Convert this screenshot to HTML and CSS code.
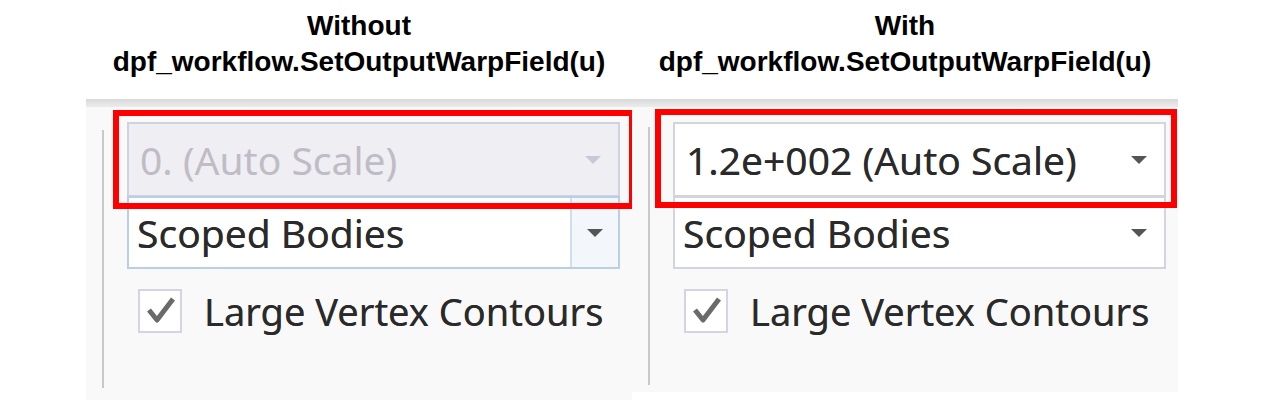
FILE: index.html
```html
<!DOCTYPE html>
<html lang="en">
<head>
<meta charset="utf-8">
<title>SetOutputWarpField comparison</title>
<link rel="stylesheet" href="styles.css">
</head>
<body>
<main class="compare">
  <section class="column">
    <h2 class="title">Without<br>dpf_workflow.SetOutputWarpField(u)</h2>
    <div class="panel panel-left">
      <div class="panel-band"></div>
      <div class="panel-body">
        <div class="rule rule-left"></div>
        <div class="controls">
          <div class="dropdown dropdown-scale dropdown-disabled">
            <span class="dd-text">0. (Auto Scale)</span>
            <span class="dd-arrow"></span>
          </div>
          <div class="dropdown dropdown-scope dropdown-hover">
            <span class="dd-text">Scoped Bodies</span>
            <span class="dd-button"><span class="dd-arrow"></span></span>
          </div>
          <label class="check">
            <span class="check-box">
              <svg viewBox="0 0 44 44" width="44" height="44"><path d="M11 21 L19 31 L35 10" fill="none" stroke="#6a6a6a" stroke-width="5" stroke-linejoin="round"/></svg>
            </span>
            <span class="check-label">Large Vertex Contours</span>
          </label>
        </div>
      </div>
      <div class="highlight highlight-left"></div>
    </div>
  </section>
  <section class="column">
    <h2 class="title">With<br>dpf_workflow.SetOutputWarpField(u)</h2>
    <div class="panel panel-right">
      <div class="panel-band"></div>
      <div class="panel-body">
        <div class="rule rule-right"></div>
        <div class="controls">
          <div class="dropdown dropdown-scale">
            <span class="dd-text">1.2e+002 (Auto Scale)</span>
            <span class="dd-arrow"></span>
          </div>
          <div class="dropdown dropdown-scope">
            <span class="dd-text">Scoped Bodies</span>
            <span class="dd-arrow"></span>
          </div>
          <label class="check">
            <span class="check-box">
              <svg viewBox="0 0 44 44" width="44" height="44"><path d="M11 21 L19 31 L35 10" fill="none" stroke="#6a6a6a" stroke-width="5" stroke-linejoin="round"/></svg>
            </span>
            <span class="check-label">Large Vertex Contours</span>
          </label>
        </div>
      </div>
      <div class="highlight highlight-right"></div>
    </div>
  </section>
</main>
</body>
</html>
```

FILE: styles.css
```css
html, body {
  margin: 0;
  padding: 0;
  background: #ffffff;
}

body {
  width: 1264px;
  height: 402px;
  overflow: hidden;
}

.compare {
  display: grid;
  grid-template-columns: 546px 546px;
  padding-left: 86px;
}

.column {
  display: flex;
  flex-direction: column;
}

.title {
  margin: 0;
  height: 99px;
  padding-top: 8px;
  box-sizing: border-box;
  font-family: "Liberation Sans", Arial, sans-serif;
  font-weight: 700;
  font-size: 28px;
  line-height: 36px;
  text-align: center;
  color: #000000;
  white-space: nowrap;
}

.panel {
  position: relative;
  background: #f9f9f9;
}

.panel-left { height: 301px; }
.panel-right { height: 293px; }

.panel-band {
  height: 8px;
  background: linear-gradient(#d9d9d9, #ececec);
}

.panel-body {
  display: flex;
  padding-left: 16px;
}

.rule {
  width: 2px;
  background: #c9c9c9;
}

.rule-left { margin-top: 23px; height: 258px; }
.rule-right { margin-top: 20px; height: 258px; }

.controls {
  display: flex;
  flex-direction: column;
  margin-left: 23px;
  margin-top: 15px;
  width: 493px;
}

.dropdown {
  position: relative;
  display: flex;
  align-items: center;
  box-sizing: border-box;
  border: 2px solid #d3d5de;
  background: #ffffff;
  font-family: "Noto Sans", "Open Sans", sans-serif;
  font-size: 39px;
  color: #2a2a2a;
  text-shadow: 0 0 0.6px rgba(40, 40, 40, 0.7);
}

.dropdown-scale {
  height: 75px;
  padding-left: 11px;
}

.dropdown-scope {
  height: 73px;
  margin-top: -1px;
  padding-left: 8px;
}

.dropdown-disabled {
  background: #eeeef3;
  border-color: #cfd2e0;
  color: #c0bcc5;
  text-shadow: none;
}

.dropdown-hover {
  border-color: #b9cfe6;
}

.dd-text {
  flex: 1;
  white-space: nowrap;
}

.dd-arrow {
  width: 0;
  height: 0;
  border-left: 8px solid transparent;
  border-right: 8px solid transparent;
  border-top: 8px solid #555555;
  margin-right: 17px;
}

.dropdown-disabled .dd-arrow {
  border-top-color: #c5c9da;
}

.dd-button {
  align-self: stretch;
  width: 46px;
  display: flex;
  align-items: center;
  justify-content: center;
  border-left: 2px solid #cfdff0;
  background: #f3f6fa;
}

.dd-button .dd-arrow {
  margin-right: 0;
}

.check {
  display: flex;
  align-items: center;
  margin-top: 16px;
  margin-left: 11px;
  font-family: "Noto Sans", "Open Sans", sans-serif;
  font-size: 38px;
  color: #2a2a2a;
  text-shadow: 0 0 0.6px rgba(40, 40, 40, 0.7);
}

.check-box {
  width: 44px;
  height: 44px;
  box-sizing: border-box;
  border: 2px solid #d4d5e0;
  background: #ffffff;
  display: flex;
}

.check-box svg {
  margin: -2px;
}

.check-label {
  margin-left: 22px;
  white-space: nowrap;
}

.highlight {
  position: absolute;
  box-sizing: border-box;
  border: 6px solid #ff0000;
  width: 522px;
  height: 99px;
}

.highlight-left { left: 27px; top: 11px; }
.highlight-right { left: 23px; top: 10px; }
```
